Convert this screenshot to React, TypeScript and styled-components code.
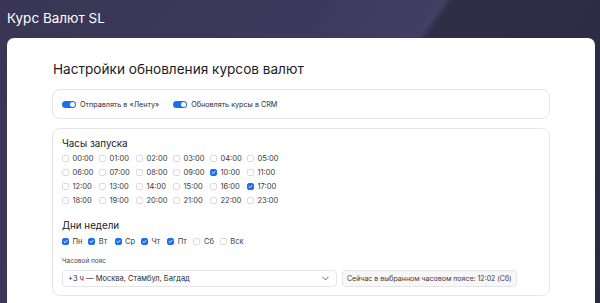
import React from "react";
import styled, { createGlobalStyle } from "styled-components";

const Global = createGlobalStyle`
  html, body { margin: 0; padding: 0; }
  body {
    font-family: Inter, "Noto Sans", sans-serif;
    background: linear-gradient(125deg, #383654 0%, #3c3a5c 40%, #423f65 54.8%, #302e47 55.8%, #2c2a41 100%);
    min-height: 303px;
    overflow: hidden;
  }
`;

const Page = styled.div`
  display: flex;
  flex-direction: column;
  height: 303px;
`;

const TopBar = styled.header`
  height: 38px;
  display: flex;
  align-items: center;
  padding: 0 7px 2px;
  box-sizing: border-box;
  color: #ffffff;
  font-size: 13.5px;
  font-weight: 400;
`;

const Card = styled.main`
  flex: 1;
  margin: 0 5px 0 7px;
  background: #ffffff;
  border-radius: 7px 7px 0 0;
  padding: 21px 45px 0 45px;
  display: flex;
  flex-direction: column;
  gap: 9px;
`;

const Heading = styled.h1`
  margin: 0 0 0 1px;
  font-size: 13.6px;
  font-weight: 400;
  line-height: 21px;
  color: #1b1b1f;
`;

const Box = styled.section<{ $pad?: string }>`
  border: 1px solid #e6e6e8;
  border-radius: 8px;
  padding: ${(p) => p.$pad ?? "0 9px"};
  box-sizing: border-box;
`;

const ToggleRow = styled.div`
  height: 28px;
  display: flex;
  align-items: center;
  gap: 14px;
`;

const ToggleItem = styled.label`
  display: flex;
  align-items: center;
  gap: 4px;
  font-size: 7.2px;
  color: #2a2a30;
`;

const Switch = styled.span`
  width: 14px;
  height: 7px;
  border-radius: 4px;
  background: #1b6ef0;
  position: relative;
  &::after {
    content: "";
    position: absolute;
    right: 1px;
    top: 1px;
    width: 5px;
    height: 5px;
    border-radius: 50%;
    background: #fff;
  }
`;

const SectionTitle = styled.h2<{ $mt?: number }>`
  margin: ${(p) => p.$mt ?? 0}px 0 0;
  font-size: 9.8px;
  font-weight: 400;
  line-height: 13px;
  color: #1b1b1f;
`;

const HourGrid = styled.div`
  display: grid;
  grid-template-columns: repeat(6, 37px);
  grid-auto-rows: 14px;
  margin-top: 1px;
`;

const CheckItem = styled.label<{ $w?: number }>`
  display: flex;
  align-items: center;
  gap: 3.5px;
  font-size: 7.5px;
  color: #3a3a40;
  ${(p) => (p.$w ? `width: ${p.$w}px;` : "")}
`;

const Box7 = styled.span<{ $on?: boolean }>`
  width: 7px;
  height: 7px;
  box-sizing: border-box;
  border-radius: 2px;
  border: 1px solid ${(p) => (p.$on ? "#1b6ef0" : "#dcdce0")};
  background: ${(p) => (p.$on ? "#1b6ef0" : "#fff")};
  display: flex;
  align-items: center;
  justify-content: center;
  flex: none;
`;

const DaysRow = styled.div`
  display: flex;
  height: 14px;
  align-items: center;
  margin-top: 2px;
`;

const FieldLabel = styled.div`
  margin-top: 9px;
  font-size: 6.5px;
  color: #4a4a52;
  line-height: 8px;
`;

const SelectRow = styled.div`
  display: flex;
  gap: 5px;
  margin-top: 5px;
  height: 17px;
`;

const Select = styled.div`
  width: 275px;
  box-sizing: border-box;
  border: 1px solid #e6e6e8;
  border-radius: 4px;
  display: flex;
  align-items: center;
  justify-content: space-between;
  padding: 0 7px 0 5px;
  font-size: 7.5px;
  color: #2a2a30;
`;

const Pill = styled.div`
  box-sizing: border-box;
  border: 1px solid #e6e6e8;
  background: #f7f7f8;
  border-radius: 4px;
  display: flex;
  align-items: center;
  padding: 0 4px;
  font-size: 7px;
  color: #3a3a40;
  white-space: nowrap;
`;

const Check = () => (
  <svg width="5" height="5" viewBox="0 0 10 10">
    <path d="M2 5.2 L4.2 7.2 L8 2.8" stroke="#fff" strokeWidth="1.8" fill="none" strokeLinecap="round" strokeLinejoin="round" />
  </svg>
);

const hours = Array.from({ length: 24 }, (_, i) => `${String(i).padStart(2, "0")}:00`);
const onHours = new Set([10, 17]);
const days = ["Пн", "Вт", "Ср", "Чт", "Пт", "Сб", "Вск"];

export default function App() {
  return (
    <>
      <Global />
      <Page>
        <TopBar>Курс Валют SL</TopBar>
        <Card>
          <Heading>Настройки обновления курсов валют</Heading>
          <Box>
            <ToggleRow>
              <ToggleItem>
                <Switch />
                Отправлять в «Ленту»
              </ToggleItem>
              <ToggleItem>
                <Switch />
                Обновлять курсы в CRM
              </ToggleItem>
            </ToggleRow>
          </Box>
          <Box $pad="8px 9px 8px">
            <SectionTitle>Часы запуска</SectionTitle>
            <HourGrid>
              {hours.map((h, i) => (
                <CheckItem key={h}>
                  <Box7 $on={onHours.has(i)}>{onHours.has(i) && <Check />}</Box7>
                  {h}
                </CheckItem>
              ))}
            </HourGrid>
            <SectionTitle $mt={12}>Дни недели</SectionTitle>
            <DaysRow>
              {days.map((d, i) => (
                <CheckItem key={d} $w={26.3}>
                  <Box7 $on={i < 5}>{i < 5 && <Check />}</Box7>
                  {d}
                </CheckItem>
              ))}
            </DaysRow>
            <FieldLabel>Часовой пояс</FieldLabel>
            <SelectRow>
              <Select>
                <span>+3 ч — Москва, Стамбул, Багдад</span>
                <svg width="7" height="5" viewBox="0 0 10 6">
                  <path d="M1 1 L5 5 L9 1" stroke="#555" strokeWidth="1.3" fill="none" strokeLinecap="round" strokeLinejoin="round" />
                </svg>
              </Select>
              <Pill>Сейчас в выбранном часовом поясе: 12:02 (Сб)</Pill>
            </SelectRow>
          </Box>
        </Card>
      </Page>
    </>
  );
}
